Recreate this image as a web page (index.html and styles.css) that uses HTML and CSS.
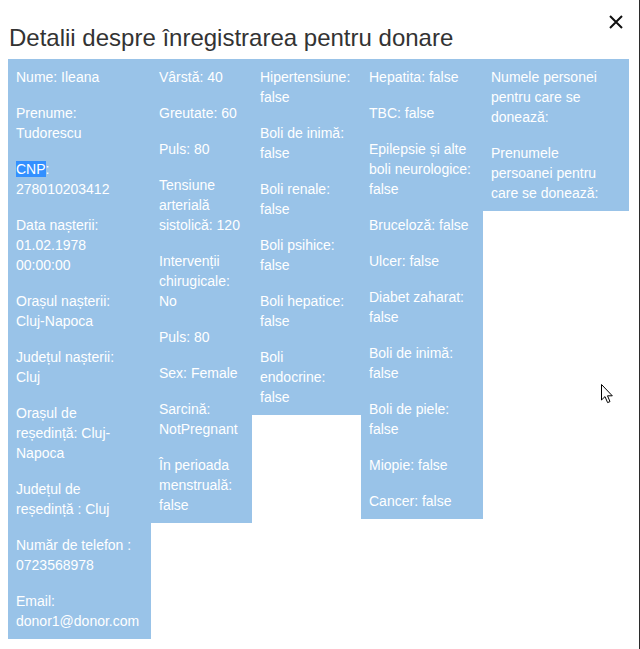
FILE: index.html
```html
<!DOCTYPE html>
<html lang="ro">
<head>
<meta charset="utf-8">
<title>Detalii</title>
<link rel="stylesheet" href="styles.css">
</head>
<body>
<div class="modal">
  <button class="close" aria-label="Close">
    <svg width="14" height="14" viewBox="0 0 14 14"><path d="M1 1 L13 13 M13 1 L1 13" stroke="#111" stroke-width="2" fill="none"/></svg>
  </button>
  <h4 class="title">Detalii despre înregistrarea pentru donare</h4>
  <div class="cols">
    <div class="col c1">
      <p>Nume: Ileana</p>
      <p>Prenume: Tudorescu</p>
      <p><span class="sel">CNP</span>: 278010203412</p>
      <p>Data nașterii: 01.02.1978 00:00:00</p>
      <p>Orașul nașterii: Cluj-Napoca</p>
      <p>Județul nașterii: Cluj</p>
      <p>Orașul de reședință: Cluj-Napoca</p>
      <p>Județul de reședință : Cluj</p>
      <p>Număr de telefon : 0723568978</p>
      <p>Email: donor1@donor.com</p>
    </div>
    <div class="col c2">
      <p>Vârstă: 40</p>
      <p>Greutate: 60</p>
      <p>Puls: 80</p>
      <p>Tensiune arterială sistolică: 120</p>
      <p>Intervenții chirugicale: No</p>
      <p>Puls: 80</p>
      <p>Sex: Female</p>
      <p>Sarcină: NotPregnant</p>
      <p>În perioada menstruală: false</p>
    </div>
    <div class="col c3">
      <p>Hipertensiune: false</p>
      <p>Boli de inimă: false</p>
      <p>Boli renale: false</p>
      <p>Boli psihice: false</p>
      <p>Boli hepatice: false</p>
      <p>Boli endocrine: false</p>
    </div>
    <div class="col c4">
      <p>Hepatita: false</p>
      <p>TBC: false</p>
      <p>Epilepsie și alte boli neurologice: false</p>
      <p>Bruceloză: false</p>
      <p>Ulcer: false</p>
      <p>Diabet zaharat: false</p>
      <p>Boli de inimă: false</p>
      <p>Boli de piele: false</p>
      <p>Miopie: false</p>
      <p>Cancer: false</p>
    </div>
    <div class="col c5">
      <p>Numele personei pentru care se donează:</p>
      <p>Prenumele persoanei pentru care se donează:</p>
    </div>
  </div>
  <svg class="cursor" width="13" height="20" viewBox="0 0 13 20"><path d="M0.5 0.5 L0.5 16 L4 12.6 L6.6 18.6 L9 17.6 L6.5 11.8 L11.3 11.8 Z" fill="#fff" stroke="#000" stroke-width="1" stroke-linejoin="miter"/></svg>
</div>
</body>
</html>
```

FILE: styles.css
```css
html, body {
  margin: 0;
  padding: 0;
  background: #fff;
}
.modal {
  position: relative;
  box-sizing: border-box;
  width: 640px;
  height: 649px;
  padding: 0 0 0 8px;
  border-right: 1px solid #2b2b2b;
  font-family: "Liberation Sans", Arial, sans-serif;
  overflow: hidden;
}
.title {
  margin: 24px 0 8px 1px;
  font-size: 24px;
  line-height: 27px;
  font-weight: normal;
  color: #333;
}
.close {
  position: absolute;
  top: 15px;
  left: 609px;
  width: 14px;
  height: 14px;
  padding: 0;
  border: 0;
  background: transparent;
  display: block;
}
.close svg { display: block; }
.cols {
  display: flex;
  align-items: flex-start;
}
.col {
  box-sizing: border-box;
  background: #99c3e8;
  color: #fff;
  font-size: 14px;
  line-height: 20px;
  padding: 8px 10px 8px 8px;
}
.col p { margin: 0 0 16px 0; }
.col p:last-child { margin-bottom: 0; }
.c1 { width: 143px; }
.c2 { width: 101px; }
.c3 { width: 109px; }
.c4 { width: 122px; }
.c5 { width: 146px; }
.sel {
  background: #3390ff;
  color: #fff;
}
.cursor {
  position: absolute;
  left: 601px;
  top: 384px;
}
```
